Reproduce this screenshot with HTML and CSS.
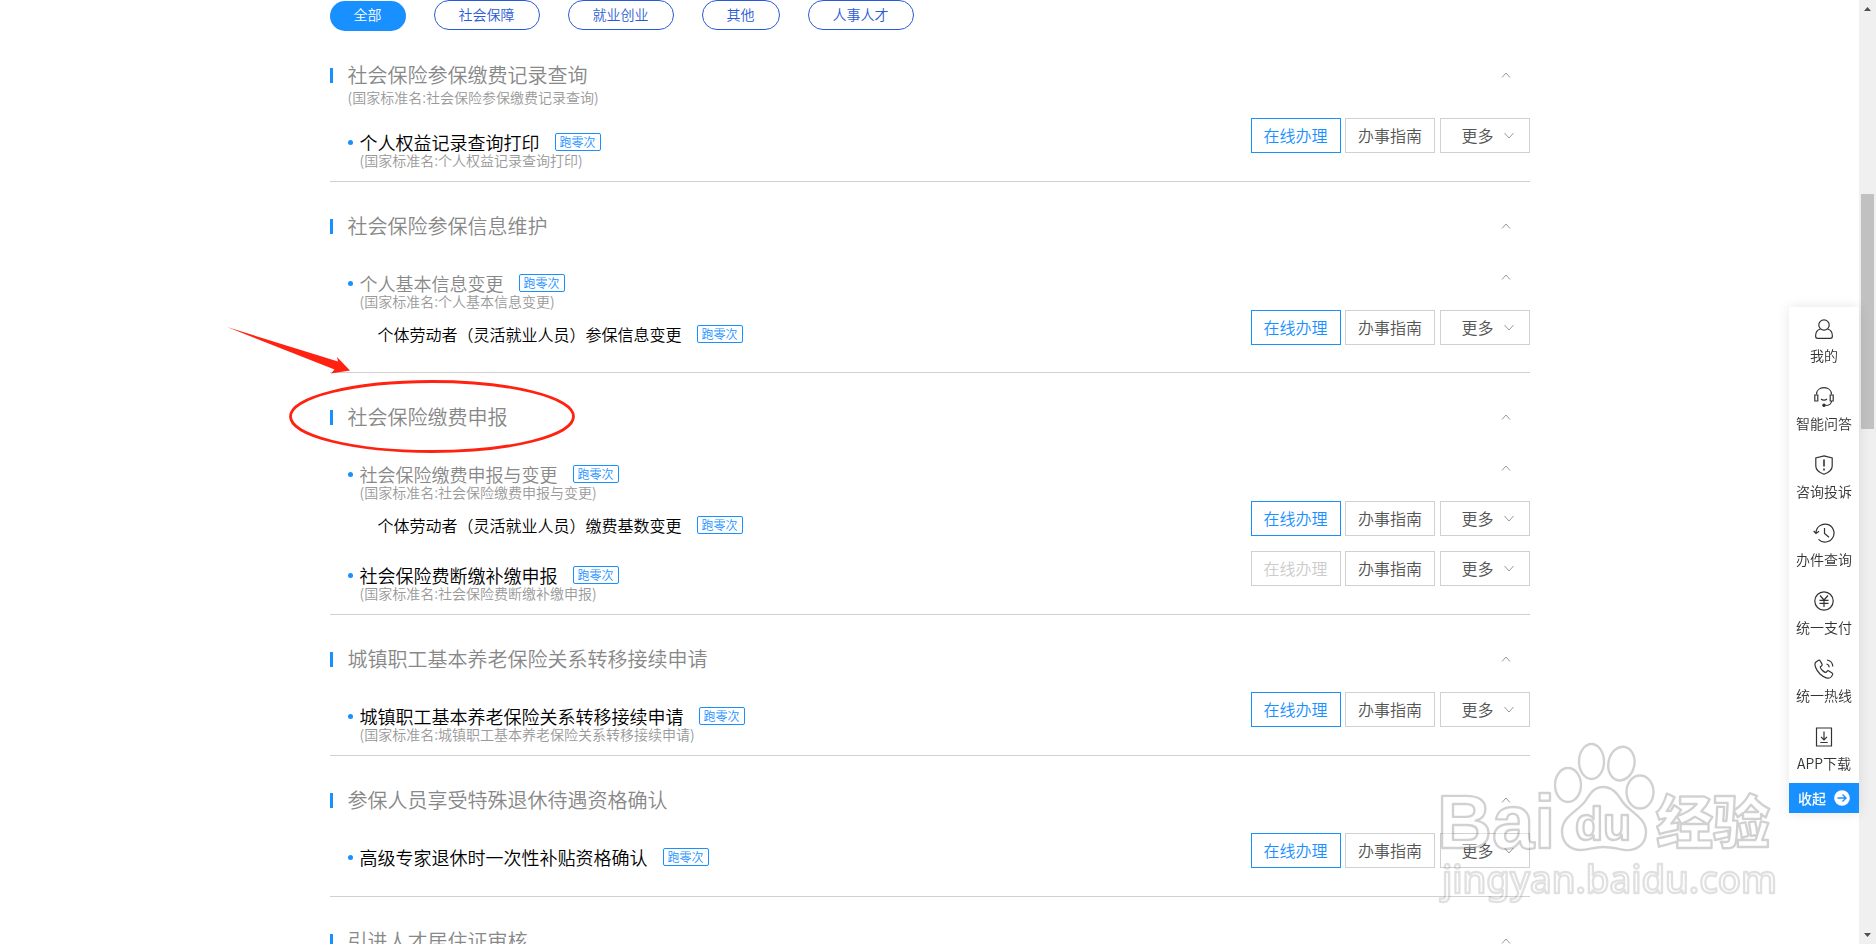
FILE: index.html
```html
<!DOCTYPE html>
<html lang="zh-CN">
  <head>
    <meta charset="UTF-8" />
    <meta name="viewport" content="width=device-width, initial-scale=1.0" />
    <title>社会保险</title>
    <link rel="stylesheet" href="styles.css">
  </head>

  <body>
    <svg class="sprite" width="0" height="0">
      <symbol id="up" viewBox="0 0 10 6"><path d="M1 5.5 5 1l4 4.5" fill="none" stroke="currentColor" /></symbol>
      <symbol id="down" viewBox="0 0 10 7"><path d="M.5 1 5 6l4.500-5" fill="none" stroke="currentColor" /></symbol>
    </svg>

    <div class="page">
      <main class="services">
        <nav class="tabs">
          <a class="tab active" href="#">全部</a>
          <a class="tab" href="#">社会保障</a>
          <a class="tab" href="#">就业创业</a>
          <a class="tab" href="#">其他</a>
          <a class="tab" href="#">人事人才</a>
        </nav>

        <section class="group">
          <div class="group-head">
            <h2>社会保险参保缴费记录查询</h2>
            <button class="toggle"><svg><use href="#up" /></svg></button>
            <p class="standard">(国家标准名:社会保险参保缴费记录查询)</p>
          </div>
          <div class="item">
            <div class="row">
              <div class="info">
                <h3>个人权益记录查询打印<span class="badge">跑零次</span></h3>
                <p class="standard">(国家标准名:个人权益记录查询打印)</p>
              </div>
              <div class="actions">
                <a class="btn primary" href="#">在线办理</a>
                <a class="btn" href="#">办事指南</a>
                <button class="btn more">更多<svg><use href="#down" /></svg></button>
              </div>
            </div>
          </div>
        </section>

        <section class="group">
          <div class="group-head">
            <h2>社会保险参保信息维护</h2>
            <button class="toggle"><svg><use href="#up" /></svg></button>
          </div>
          <div class="item">
            <div class="row">
              <div class="info parent">
                <h3>个人基本信息变更<span class="badge">跑零次</span></h3>
                <p class="standard">(国家标准名:个人基本信息变更)</p>
              </div>
              <button class="toggle"><svg><use href="#up" /></svg></button>
            </div>
            <div class="row">
              <div class="info child">
                <h4>个体劳动者（灵活就业人员）参保信息变更<span class="badge">跑零次</span></h4>
              </div>
              <div class="actions">
                <a class="btn primary" href="#">在线办理</a>
                <a class="btn" href="#">办事指南</a>
                <button class="btn more">更多<svg><use href="#down" /></svg></button>
              </div>
            </div>
          </div>
        </section>

        <section class="group">
          <div class="group-head">
            <h2>社会保险缴费申报</h2>
            <button class="toggle"><svg><use href="#up" /></svg></button>
          </div>
          <div class="item">
            <div class="row">
              <div class="info parent">
                <h3>社会保险缴费申报与变更<span class="badge">跑零次</span></h3>
                <p class="standard">(国家标准名:社会保险缴费申报与变更)</p>
              </div>
              <button class="toggle"><svg><use href="#up" /></svg></button>
            </div>
            <div class="row">
              <div class="info child">
                <h4>个体劳动者（灵活就业人员）缴费基数变更<span class="badge">跑零次</span></h4>
              </div>
              <div class="actions">
                <a class="btn primary" href="#">在线办理</a>
                <a class="btn" href="#">办事指南</a>
                <button class="btn more">更多<svg><use href="#down" /></svg></button>
              </div>
            </div>
          </div>
          <div class="item">
            <div class="row">
              <div class="info">
                <h3>社会保险费断缴补缴申报<span class="badge">跑零次</span></h3>
                <p class="standard">(国家标准名:社会保险费断缴补缴申报)</p>
              </div>
              <div class="actions">
                <button class="btn" disabled>在线办理</button>
                <a class="btn" href="#">办事指南</a>
                <button class="btn more">更多<svg><use href="#down" /></svg></button>
              </div>
            </div>
          </div>
        </section>

        <section class="group">
          <div class="group-head">
            <h2>城镇职工基本养老保险关系转移接续申请</h2>
            <button class="toggle"><svg><use href="#up" /></svg></button>
          </div>
          <div class="item">
            <div class="row">
              <div class="info">
                <h3>城镇职工基本养老保险关系转移接续申请<span class="badge">跑零次</span></h3>
                <p class="standard">(国家标准名:城镇职工基本养老保险关系转移接续申请)</p>
              </div>
              <div class="actions">
                <a class="btn primary" href="#">在线办理</a>
                <a class="btn" href="#">办事指南</a>
                <button class="btn more">更多<svg><use href="#down" /></svg></button>
              </div>
            </div>
          </div>
        </section>

        <section class="group">
          <div class="group-head">
            <h2>参保人员享受特殊退休待遇资格确认</h2>
            <button class="toggle"><svg><use href="#up" /></svg></button>
          </div>
          <div class="item">
            <div class="row">
              <div class="info">
                <h3>高级专家退休时一次性补贴资格确认<span class="badge">跑零次</span></h3>
              </div>
              <div class="actions">
                <a class="btn primary" href="#">在线办理</a>
                <a class="btn" href="#">办事指南</a>
                <button class="btn more">更多<svg><use href="#down" /></svg></button>
              </div>
            </div>
          </div>
        </section>

        <section class="group">
          <div class="group-head">
            <h2>引进人才居住证审核</h2>
            <button class="toggle"><svg><use href="#up" /></svg></button>
          </div>
        </section>

        <!-- arrow and ring over the third group -->
        <svg class="marker" width="360" height="140" viewBox="220 320 360 140">
          <path d="M227 327 338 361.500 337 357 350 370.500 331 373.500 334.500 369.500Z" fill="#ff2211" />
          <ellipse cx="432" cy="416.500" rx="141.500" ry="35" fill="none" stroke="#ff2211" stroke-width="2.800" />
        </svg>
      </main>

      <div class="scrollbar">
        <svg width="7" height="4"><path d="M0 4 3.500 0 7 4Z" fill="#505050" /></svg>
        <div class="thumb"></div>
        <svg width="7" height="4"><path d="M0 0 3.500 4 7 0Z" fill="#505050" /></svg>
      </div>
    </div>

    <aside class="sidebar">
      <a href="#">
        <svg viewBox="0 0 20 20"><circle cx="10" cy="6" r="5.200" /><path d="M6.500 10C3.500 10.800 1.600 13.500 1.600 17c0 1.500.6 2.300 2 2.300h12.800c1.400 0 2-.8 2-2.300 0-3.500-1.900-6.200-4.900-7" /></svg>
        我的
      </a>
      <a href="#">
        <svg viewBox="0 0 20 20"><path d="M2.500 7.500C2.500 3.500 5.500.7 10 .7s7.500 2.800 7.500 6.800M17.500 14c0 2.500-2.500 4.500-6 4.500M7 12c1.500 1.600 4.500 1.600 6 0" /><path d="M.8 8h3v6h-3zM16.200 8h3v6h-3z" /><circle class="solid" cx="10" cy="18.300" r="1.200" /></svg>
        智能问答
      </a>
      <a href="#">
        <svg viewBox="0 0 20 20"><path d="M10 .8 18.200 3v8c0 4-3.200 6.500-8.200 8.300C5 17.500 1.800 15 1.800 11V3z" /><path d="M10 4.500v7M10 13.500v2" stroke-width="1.600" /></svg>
        咨询投诉
      </a>
      <a href="#">
        <svg viewBox="0 0 20 20"><path d="M2 10a9 9 0 1 1 2.500 6.300M-.3 8 2 10.500 5 8.300M10.500 5v5.500l4.500 3.800" /></svg>
        办件查询
      </a>
      <a href="#">
        <svg viewBox="0 0 20 20"><circle cx="10" cy="10" r="9.200" /><path d="m6 4.500 4 4.500 4-4.500M5.500 9.300h9M5.500 12.300h9M10 9v7" /></svg>
        统一支付
      </a>
      <a href="#">
        <svg viewBox="0 0 20 20"><path d="M4.200 1.500 2 3C-.5 5 2 11 6 15c4 3.700 9 5.500 11 3l1.500-2c.6-1 .2-1.600-.5-2.100l-3-1.900c-.8-.5-1.500-.3-2 .3l-1 1.200C10 13.500 6.500 10 6.200 8l1.500-1.200c.6-.5.600-1.200.2-1.900L6.300 2c-.6-.9-1.300-1-2.100-.5z" /><path d="M12.500 5c1.500.3 2.500 1.500 2.700 3.200M13 1c3.500.5 5.500 3 5.800 6.500" /></svg>
        统一热线
      </a>
      <a href="#">
        <svg viewBox="0 0 20 20"><path d="M2.500 1h15v18h-15zM10 4.500v8M7 9.800l3 3 3-3M6.300 15.500h7.400" /></svg>
        APP下载
      </a>
      <button class="collapse">
        收起
        <svg viewBox="0 0 16 16"><circle cx="8" cy="8" r="7.800" fill="#fff" /><path d="M3.500 8h8.500M8.500 4.500 12 8l-3.500 3.500" fill="none" stroke="#1890ff" stroke-width="1.400" /></svg>
      </button>
    </aside>

    <svg class="watermark" width="350" height="170" viewBox="1435 738 350 170">
      <g class="outline">
        <ellipse cx="1568" cy="785" rx="13" ry="17" />
        <ellipse cx="1591.500" cy="761.500" rx="12.500" ry="17.500" />
        <ellipse cx="1621.500" cy="763.500" rx="13" ry="17" transform="rotate(12 1621 763)" />
        <ellipse cx="1640" cy="792" rx="13.500" ry="16.500" />
        <path d="M1603 787c9 0 14 6 19 14 7 11 24 16 24 31 0 13-10 19-21 18-7-1-13-3-22-3s-15 3-22 3c-12 0-19-8-19-19 0-15 18-21 24-31 5-8 9-13 17-13z" />
      </g>
      <text class="outline latin" x="1437" y="848">Bai</text>
      <text class="outline du" x="1575" y="840">du</text>
      <text class="outline cjk" x="1656" y="843">经验</text>
      <text class="outline url" x="1442" y="893">jingyan.baidu.com</text>
    </svg>
  </body>
</html>
```
FILE: styles.css
```css
* {
  box-sizing: border-box;
}

body {
  margin: 0;
  background: #fff;
  color: #000;
  font-family: "Noto Sans CJK SC", sans-serif;
  font-weight: 350;
}

h2, h3, h4, p {
  margin: 0;
  font-weight: 350;
}

a {
  color: inherit;
  text-decoration: none;
}

button {
  padding: 0;
  border: 0;
  background: none;
  font: inherit;
  cursor: pointer;
}

.sprite {
  position: absolute;
}

.page {
  display: flex;
  height: 100vh;
  overflow: hidden;
}

.services {
  position: relative;
  width: 100%;
  max-width: 1200px;
  margin: 0 auto;
}

/* tabs */
.tabs {
  display: flex;
  gap: 28px;
  height: 31px;
}

.tab {
  height: 30px;
  padding: 0 24px;
  border: 1px solid #2a5bd7;
  border-radius: 15px;
  color: #2a5bd7;
  font-size: 14px;
  line-height: 26px;
}

.tab.active {
  align-self: flex-end;
  border: 0;
  background: #1890ff;
  color: #fff;
}

/* service groups */
.group {
  padding-bottom: 20px;
  border-bottom: 1px solid #d0d0d0;
}

.group-head {
  display: grid;
  grid-template-columns: 1fr auto;
  grid-template-rows: 30px auto;
  align-items: center;
  min-height: 70px;
  padding-top: 29px;
}

.group-head h2 {
  display: flex;
  align-items: center;
  gap: 15px;
  color: #888;
  font-size: 20px;
  line-height: 30px;
}

.group-head h2::before {
  content: "";
  width: 3px;
  height: 15px;
  background: #1890ff;
}

.group-head .standard {
  height: 21px;
  padding-left: 18px;
}

.standard {
  color: #999;
  font-size: 14px;
  line-height: 14px;
}

.toggle {
  display: flex;
  margin-right: 19px;
  color: #999;
}

.toggle svg {
  width: 10px;
  height: 6px;
}

.item + .item {
  margin-top: 1px;
}

.row {
  display: flex;
  justify-content: space-between;
  height: 50px;
}

.row .toggle {
  align-self: center;
}

.info {
  padding: 19px 0 0 30px;
}

.info h3,
.info h4 {
  display: flex;
  align-items: center;
  font-size: 18px;
  line-height: 24px;
}

.info h3::before {
  content: "";
  width: 5px;
  height: 5px;
  margin: 0 7px 0 -12px;
  border-radius: 50%;
  background: #1890ff;
}

.info h4 {
  font-size: 16px;
}

.info .standard {
  margin-top: -1px;
}

.parent h3 {
  color: #888;
}

.child {
  padding: 20px 0 0 48px;
}

.badge {
  height: 18px;
  margin-left: 15px;
  padding: 0 4px;
  border: 1px solid #1890ff;
  border-radius: 2px;
  color: #1890ff;
  font-size: 12px;
  line-height: 16px;
}

.actions {
  display: flex;
  justify-content: space-between;
  width: 279px;
  padding-top: 7px;
}

.child + .actions {
  padding-top: 8px;
}

.btn {
  width: 90px;
  height: 35px;
  border: 1px solid #d0d0d0;
  color: #555;
  font-size: 16px;
  line-height: 33px;
  text-align: center;
}

.btn.primary {
  border-color: #1890ff;
  color: #1890ff;
}

.btn:disabled {
  color: #ccc;
  cursor: default;
}

.more {
  display: flex;
  align-items: center;
  justify-content: flex-end;
  gap: 10px;
  padding-right: 15px;
}

.more svg {
  width: 10px;
  height: 7px;
  color: #999;
}

.marker {
  position: absolute;
  top: 320px;
  left: -110px;
}

/* window scrollbar */
.scrollbar {
  display: flex;
  flex: none;
  flex-direction: column;
  align-items: center;
  width: 17px;
  padding: 7px 0;
  background: #f0f0f0;
}

.thumb {
  width: 13px;
  height: 235px;
  margin: 183px 0 auto;
  background: #c1c1c1;
}

/* right tool bar */
.sidebar {
  position: fixed;
  top: 307px;
  right: 17px;
  width: 70px;
  background: #fff;
  box-shadow: 0 0 12px rgba(0, 0, 0, 0.1);
  color: #333;
  font-size: 14px;
  line-height: 20px;
}

.sidebar a {
  display: flex;
  flex-direction: column;
  align-items: center;
  gap: 6px;
  height: 68px;
  padding-top: 12px;
}

.sidebar a svg {
  width: 20px;
  height: 20px;
  overflow: visible;
  fill: none;
  stroke: #333;
  stroke-width: 1.2;
}

.sidebar .solid {
  fill: #333;
}

.collapse {
  display: flex;
  align-items: center;
  justify-content: center;
  gap: 8px;
  width: 100%;
  height: 30px;
  background: #1890ff;
  color: #fff;
  font-weight: 500;
}

.collapse svg {
  width: 16px;
  height: 16px;
}

/* site watermark */
.watermark {
  position: fixed;
  right: 91px;
  bottom: 36px;
  pointer-events: none;
}

.outline {
  fill: rgba(255, 255, 255, 0.4);
  stroke: rgba(0, 0, 0, 0.18);
  stroke-width: 2.4;
  stroke-linejoin: round;
}

.latin {
  font: 700 76px "Liberation Sans", sans-serif;
}

.du {
  font: 700 46px "Liberation Sans", sans-serif;
}

.cjk {
  font: 900 57px "Noto Sans CJK SC", sans-serif;
}

.url {
  font: 500 38px "Noto Sans", sans-serif;
  stroke: rgba(0, 0, 0, 0.12);
}
```
